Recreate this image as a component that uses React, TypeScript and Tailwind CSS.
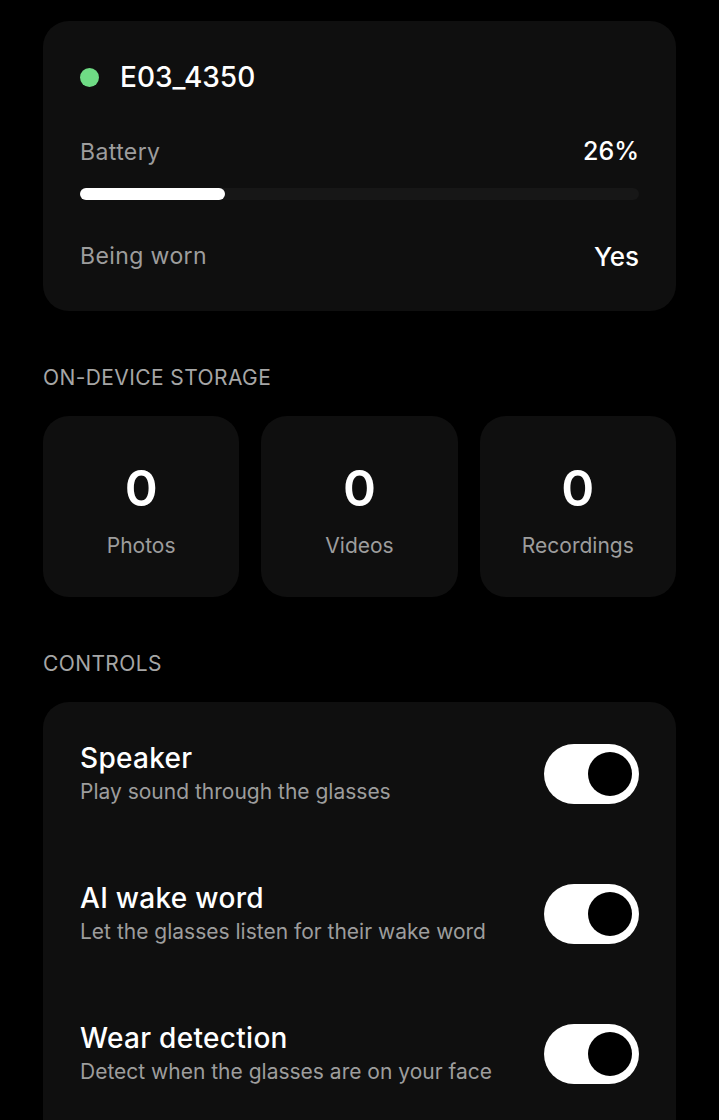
const controls = [
  { title: "Speaker", desc: "Play sound through the glasses" },
  { title: "AI wake word", desc: "Let the glasses listen for their wake word" },
  { title: "Wear detection", desc: "Detect when the glasses are on your face" },
];

const storage = [
  { count: 0, label: "Photos" },
  { count: 0, label: "Videos" },
  { count: 0, label: "Recordings" },
];

function Toggle() {
  return (
    <div className="flex h-[60px] w-[95px] shrink-0 items-center justify-end rounded-full bg-white pr-[7px]">
      <div className="h-[44px] w-[44px] rounded-full bg-black" />
    </div>
  );
}

export default function App() {
  const battery = 26;
  return (
    <div
      className="min-h-[1120px] bg-black px-[43px] pt-[21px] text-white"
      style={{ fontFamily: "Inter, 'Noto Sans', sans-serif" }}
    >
      {/* device card */}
      <div className="rounded-[26px] bg-[#0f0f0f] px-[37px] pb-[40px] pt-[40px]">
        <div className="flex h-[32px] items-center gap-[21px]">
          <span className="h-[19px] w-[19px] rounded-full bg-[#6fdc85]" />
          <span className="text-[28px] font-medium leading-[32px]">E03_4350</span>
        </div>
        <div className="mt-[44px] flex h-[30px] items-center justify-between">
          <span className="text-[23px] tracking-[0.4px] text-[#9d9d9d]">Battery</span>
          <span className="text-[25px] font-medium">{battery}%</span>
        </div>
        <div className="mt-[21px] h-[12px] w-full rounded-full bg-[#171717]">
          <div className="h-full rounded-full bg-white" style={{ width: `${battery}%` }} />
        </div>
        <div className="mt-[41px] flex h-[30px] items-center justify-between">
          <span className="text-[23px] tracking-[0.4px] text-[#9d9d9d]">Being worn</span>
          <span className="text-[26px] font-medium">Yes</span>
        </div>
      </div>

      <div className="mt-[53px] text-[21px] leading-[28px] tracking-[0.4px] text-[#a6a6a6]">
        ON-DEVICE STORAGE
      </div>
      <div className="mt-[24px] grid grid-cols-3 gap-[22px]">
        {storage.map((s) => (
          <div
            key={s.label}
            className="flex h-[181px] flex-col items-center rounded-[26px] bg-[#0f0f0f] pt-[47px]"
          >
            <span className="text-[50px] font-semibold leading-[50px]">{s.count}</span>
            <span className="mt-[19px] text-[21px] leading-[28px] text-[#9d9d9d]">{s.label}</span>
          </div>
        ))}
      </div>

      <div className="mt-[53px] text-[21px] leading-[28px] tracking-[0.4px] text-[#a6a6a6]">
        CONTROLS
      </div>
      <div className="mt-[24px] flex flex-col gap-[75px] rounded-t-[26px] bg-[#0f0f0f] px-[37px] pb-[60px] pt-[39px]">
        {controls.map((c) => (
          <div key={c.title} className="flex items-center justify-between">
            <div>
              <div className="text-[28px] font-medium leading-[34px] tracking-[0.3px]">{c.title}</div>
              <div className="mt-[3px] text-[21px] leading-[28px] text-[#9d9d9d]">{c.desc}</div>
            </div>
            <Toggle />
          </div>
        ))}
      </div>
    </div>
  );
}
